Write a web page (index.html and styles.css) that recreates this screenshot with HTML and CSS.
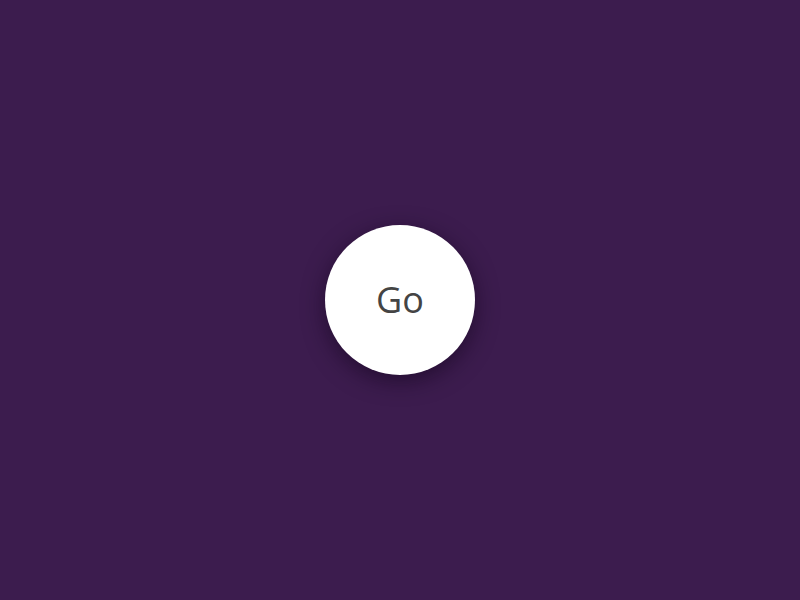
FILE: index.html
```html
<!DOCTYPE html>
<html>
<head>
<meta charset="utf-8">
<link rel="stylesheet" href="styles.css">
</head>
<body>
<main class="stage">
  <button class="go-button">Go</button>
</main>
</body>
</html>
```
FILE: styles.css
```css
html, body {
  margin: 0;
  padding: 0;
  height: 100%;
}
body {
  background: #3c1c4e;
}
.stage {
  display: flex;
  align-items: center;
  justify-content: center;
  height: 600px;
}
.go-button {
  width: 150px;
  height: 150px;
  border-radius: 50%;
  border: none;
  background: #ffffff;
  color: #444444;
  font-family: "Open Sans", sans-serif;
  font-size: 36px;
  font-weight: 400;
  line-height: 1;
  padding: 0;
  box-shadow: 0 6px 22px rgba(20, 5, 30, 0.6);
  cursor: pointer;
}
```
